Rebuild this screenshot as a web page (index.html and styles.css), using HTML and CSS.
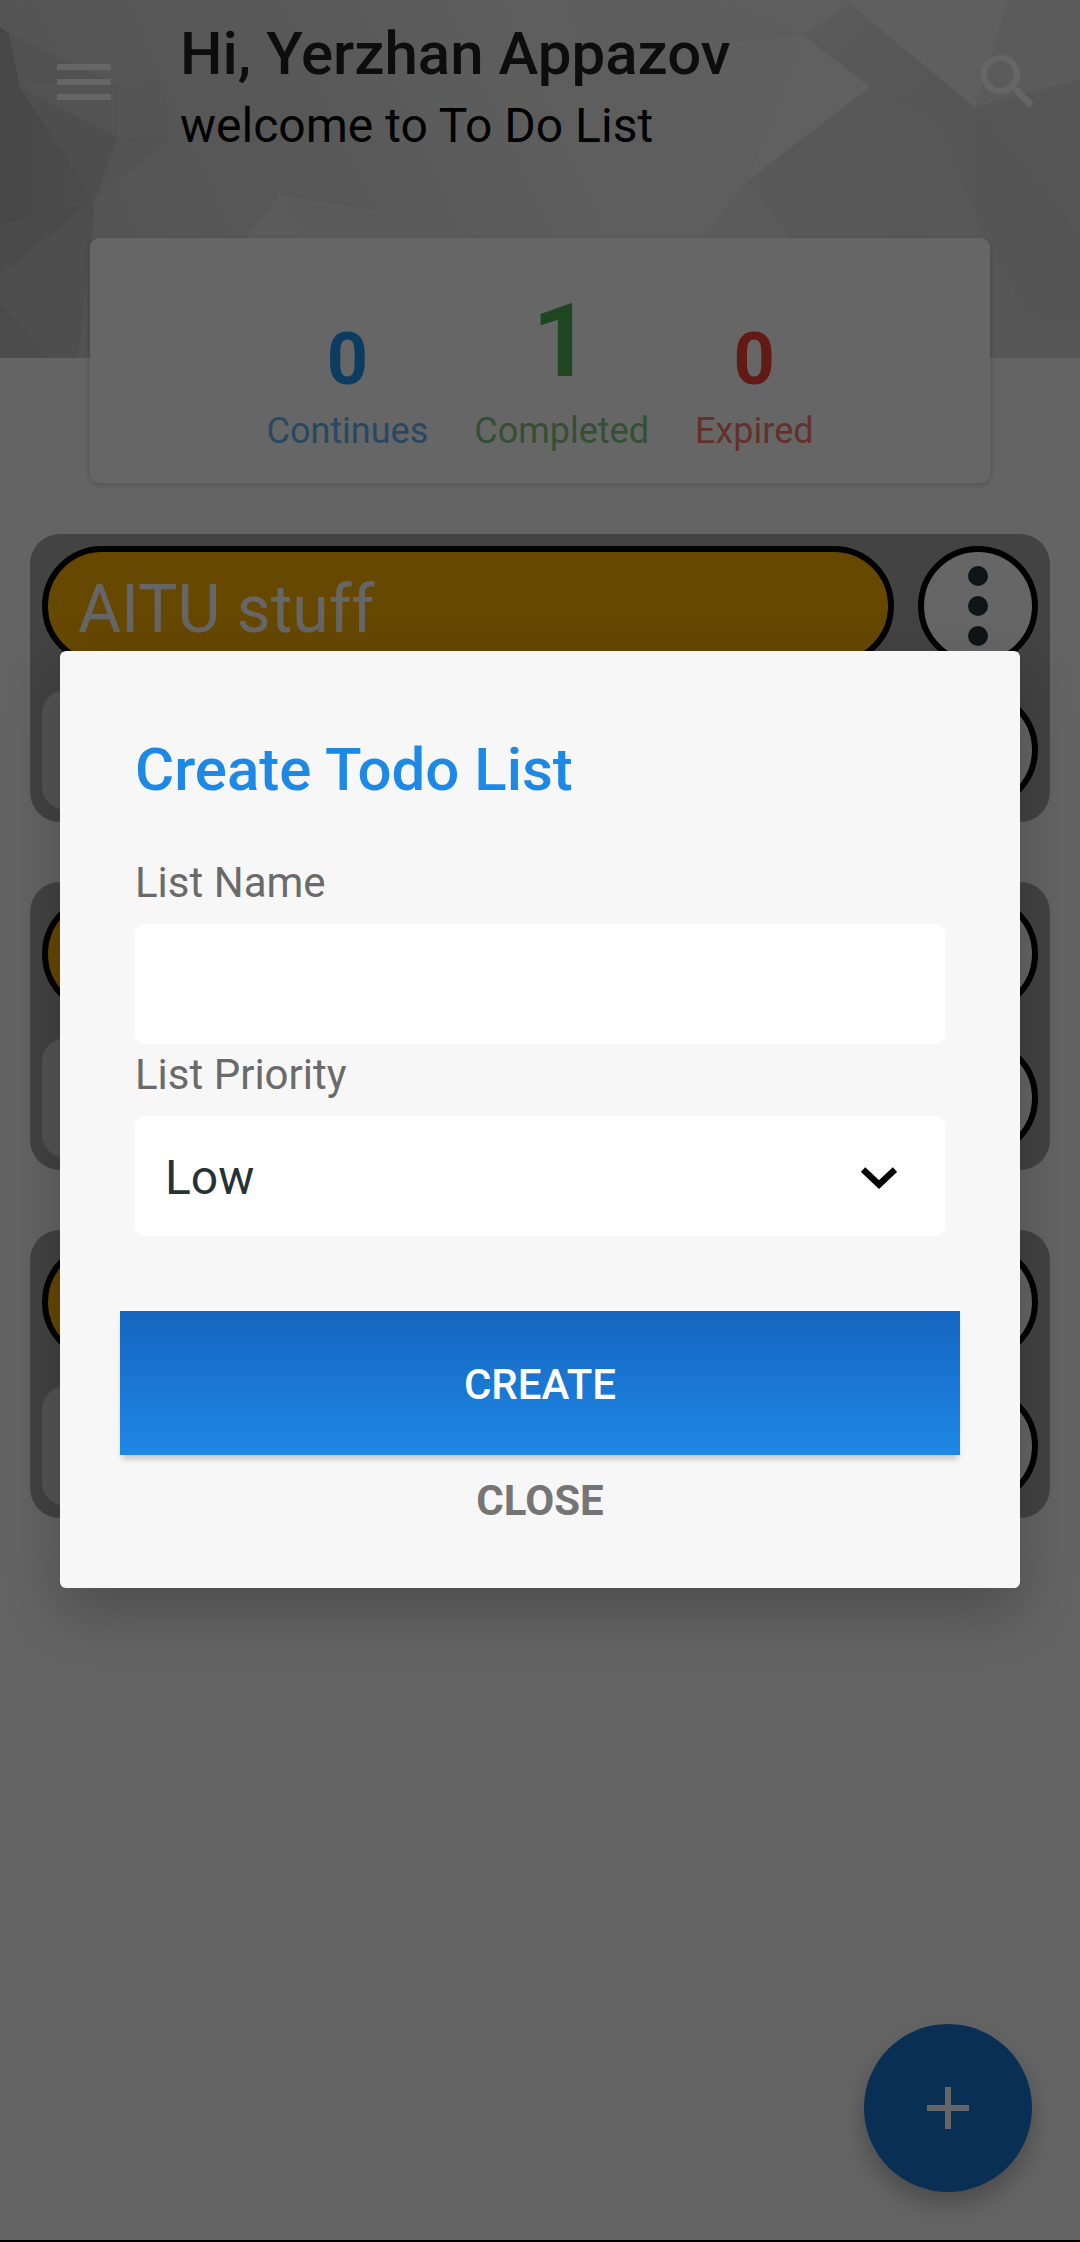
FILE: index.html
```html
<!DOCTYPE html>
<html lang="en">
<head>
<meta charset="utf-8">
<title>To Do List</title>
<link rel="stylesheet" href="styles.css">
</head>
<body>
<div class="screen">
  <header class="header">
    <svg class="header-art" viewBox="0 0 1080 358" preserveAspectRatio="none" aria-hidden="true">
      <defs>
        <linearGradient id="base" x1="0" x2="1" y1="0.15" y2="0">
          <stop offset="0" stop-color="#d4d4d4"/>
          <stop offset=".25" stop-color="#dcdcdc"/>
          <stop offset=".45" stop-color="#e9e9e9"/>
          <stop offset="1" stop-color="#ececec"/>
        </linearGradient>
        <linearGradient id="shade" x1="0" x2="1" y1="0" y2="0">
          <stop offset="0" stop-color="#b2b2b2"/>
          <stop offset="1" stop-color="#bebebe"/>
        </linearGradient>
        <linearGradient id="ridge" x1="0" x2="1" y1="0" y2=".6">
          <stop offset="0" stop-color="#e2e2e2"/>
          <stop offset="1" stop-color="#d6d6d6"/>
        </linearGradient>
        <linearGradient id="slope" x1="0" x2="1" y1="0" y2="0">
          <stop offset="0" stop-color="#dedede"/>
          <stop offset="1" stop-color="#d8d8d8"/>
        </linearGradient>
        <linearGradient id="edge" x1="0" x2="1" y1="0" y2="0">
          <stop offset="0" stop-color="#d7d7d7"/>
          <stop offset="1" stop-color="#d2d2d2"/>
        </linearGradient>
      </defs>
      <rect width="1080" height="358" fill="url(#base)"/>
      <polygon points="0,0 18,0 9,33 0,27" fill="#d2d2d2"/>
      <polygon points="0,27 9,33 20,87 95,200 0,225" fill="url(#shade)"/>
      <polygon points="9,33 108,80 20,87" fill="#cacaca"/>
      <polygon points="20,87 108,80 118,85 118,138" fill="#d0d0d0"/>
      <polygon points="20,87 118,138 95,200" fill="#c4c4c4"/>
      <polygon points="118,85 160,78 175,135 118,138" fill="#d4d4d4"/>
      <polygon points="118,138 175,135 95,200" fill="#d0d0d0"/>
      <polygon points="0,225 95,200 0,275" fill="#bababa"/>
      <polygon points="0,275 95,200 83,358 50,358 0,303" fill="#c2c2c2"/>
      <polygon points="0,303 50,358 0,358" fill="#bcbcbc"/>
      <polygon points="95,200 90,358 78,358" fill="#cdcdcd"/>
      <polygon points="280,195 305,238 245,238" fill="#e3e3e3"/>
      <polygon points="280,195 400,215 430,238 305,238" fill="#e1e1e1"/>
      <polygon points="720,0 803,35 730,42 575,40 565,0" fill="#e8e8e8"/>
      <polygon points="803,35 870,87 747,181 760,150" fill="#efefef"/>
      <polygon points="730,42 803,35 760,150 690,140" fill="#ededed"/>
      <polygon points="850,4 975,107 935,118 870,87 803,35" fill="url(#ridge)"/>
      <polygon points="850,0 1008,0 975,107 850,4" fill="#eeeeee"/>
      <polygon points="1008,0 1080,0 1080,80 975,107" fill="#e4e4e4"/>
      <polygon points="870,87 935,118 975,107 990,238 790,238 747,181" fill="url(#slope)"/>
      <polygon points="935,118 985,238 922,238" fill="#dbdbdb"/>
      <polygon points="975,107 1080,80 1080,358 1028,320 985,238 940,118" fill="url(#edge)"/>
      <polygon points="975,107 1080,80 1080,240 1060,205" fill="#d7d7d7"/>
      <polygon points="985,238 1028,320 985,340" fill="#d8d8d8"/>
      <polygon points="1028,318 1080,318 1080,358 985,358 985,340" fill="#d8d8d8"/>
      <polygon points="747,181 790,238 703,238" fill="#e4e4e4"/>
    </svg>
    <button class="icon-button" aria-label="Menu">
      <svg viewBox="0 0 24 24"><path d="M3 18h18v-2H3v2zm0-5h18v-2H3v2zm0-7v2h18V6H3z"/></svg>
    </button>
    <div class="greeting">
      <h1 class="greeting-name">Hi, Yerzhan Appazov</h1>
      <p class="greeting-text">welcome to To Do List</p>
    </div>
    <button class="icon-button" aria-label="Search">
      <svg viewBox="0 0 24 24"><path d="M15.5 14h-.79l-.28-.27C15.41 12.59 16 11.11 16 9.5 16 5.91 13.09 3 9.5 3S3 5.91 3 9.5 5.91 16 9.5 16c1.61 0 3.09-.59 4.23-1.57l.27.28v.79l5 4.99L20.49 19l-4.99-5zm-6 0C7.01 14 5 11.99 5 9.5S7.01 5 9.5 5 14 7.01 14 9.5 11.99 14 9.5 14z"/></svg>
    </button>
  </header>

  <section class="stats">
    <div class="stat stat-continues"><span class="stat-value">0</span><span class="stat-label">Continues</span></div>
    <div class="stat stat-completed"><span class="stat-value">1</span><span class="stat-label">Completed</span></div>
    <div class="stat stat-expired"><span class="stat-value">0</span><span class="stat-label">Expired</span></div>
  </section>

  <main class="lists">
    <article class="list">
      <div class="list-title">AITU stuff</div>
      <button class="more"><svg viewBox="0 0 108 108"><circle cx="54" cy="24" r="10"/><circle cx="54" cy="54" r="10"/><circle cx="54" cy="84" r="10"/></svg></button>
      <div class="list-item"></div>
      <button class="more"></button>
    </article>
    <article class="list">
      <div class="list-title"></div>
      <button class="more"></button>
      <div class="list-item"></div>
      <button class="more"></button>
    </article>
    <article class="list">
      <div class="list-title"></div>
      <button class="more"></button>
      <div class="list-item"></div>
      <button class="more"></button>
    </article>
  </main>

  <button class="fab" aria-label="Add list">
    <svg viewBox="0 0 24 24"><path d="M19 13h-6v6h-2v-6H5v-2h6V5h2v6h6v2z"/></svg>
  </button>

  <div class="scrim">
    <form class="dialog">
      <h2 class="dialog-title">Create Todo List</h2>
      <label class="field-label" for="list-name">List Name</label>
      <input class="field" id="list-name" type="text">
      <span class="field-label field-label-next">List Priority</span>
      <div class="field field-select">
        <span>Low</span>
        <svg class="chevron" viewBox="0 0 36 22"><path d="M2 2.5L18 17.5L34 2.5"/></svg>
      </div>
      <button class="create" type="button">CREATE</button>
      <button class="close" type="button">CLOSE</button>
    </form>
  </div>
</div>
</body>
</html>
```

FILE: styles.css
```css
* {
  box-sizing: border-box;
}

body {
  margin: 0;
  font-family: Roboto, "Noto Sans", sans-serif;
  background: #000;
}

h1, h2, p {
  margin: 0;
}

button, input {
  border: 0;
  padding: 0;
  font-family: inherit;
}

.screen {
  position: relative;
  height: 2242px;
  background: #fafafa;
  border-bottom: 2px solid #000;
  overflow: hidden;
}

.header {
  position: relative;
  display: flex;
  align-items: flex-start;
  height: 358px;
  padding: 19px 36px 0 48px;
}

.header-art {
  position: absolute;
  inset: 0;
  width: 100%;
  height: 100%;
}

.icon-button {
  position: relative;
  width: 72px;
  height: 72px;
  margin-top: 27px;
  background: none;
}

.icon-button svg {
  display: block;
  fill: #fff;
}

.greeting {
  position: relative;
  flex: 1;
  padding-left: 60px;
}

.greeting-name {
  font-size: 60px;
  line-height: 70px;
  font-weight: 500;
  color: #212121;
}

.greeting-text {
  margin-top: 8px;
  font-size: 48px;
  line-height: 57px;
  color: #000;
}

.stats {
  position: relative;
  display: flex;
  justify-content: center;
  align-items: flex-end;
  gap: 46px;
  width: 900px;
  height: 245px;
  margin: -120px auto 0;
  padding-bottom: 31px;
  border-radius: 9px;
  background: #fff;
  box-shadow: 0 2px 6px rgba(0, 0, 0, .18);
}

.stat {
  display: flex;
  flex-direction: column;
  align-items: center;
  gap: 9px;
}

.stat-value {
  font-size: 72px;
  line-height: 82px;
  font-weight: 700;
}

.stat-label {
  font-size: 36px;
  line-height: 42px;
  opacity: .7;
}

.stat-continues {
  color: #2196f3;
}

.stat-completed {
  color: #4caf50;
}

.stat-completed .stat-value {
  font-size: 102px;
  line-height: 120px;
}

.stat-expired {
  color: #f44336;
}

.lists {
  display: flex;
  flex-direction: column;
  gap: 60px;
  padding: 51px 30px 0;
}

.list {
  display: grid;
  grid-template-columns: 852px 120px;
  grid-auto-rows: 120px;
  gap: 24px;
  padding: 12px;
  border-radius: 30px;
  background: #a9a9a9;
}

.list-title {
  padding: 19px 30px 0;
  border: 6px solid #000;
  border-radius: 60px;
  background: #ffb300;
  color: #fff;
  font-size: 66px;
  line-height: 78px;
}

.list-item {
  border-radius: 24px;
  background: #d3d3d3;
}

.more {
  border: 6px solid #000;
  border-radius: 50%;
  background: #fff;
}

.more svg {
  display: block;
  fill: #263238;
}

.fab {
  position: absolute;
  right: 48px;
  bottom: 48px;
  display: grid;
  place-items: center;
  width: 168px;
  height: 168px;
  border-radius: 50%;
  background: #1976d2;
  box-shadow: 0 12px 24px rgba(0, 0, 0, .26);
}

.fab svg {
  width: 72px;
  fill: #fff;
}

.scrim {
  position: absolute;
  inset: 0;
  display: flex;
  justify-content: center;
  align-items: flex-start;
  padding-top: 651px;
  background: rgba(0, 0, 0, .6);
}

.dialog {
  display: flex;
  flex-direction: column;
  width: 960px;
  height: 937px;
  padding: 84px 60px 0;
  border-radius: 6px;
  background: #f7f7f7;
  box-shadow: 0 24px 60px rgba(0, 0, 0, .24);
}

.dialog-title {
  margin: 0 15px 53px;
  font-size: 60px;
  line-height: 70px;
  font-weight: 500;
  color: #1e88e5;
}

.field-label {
  margin: 0 15px 17px;
  font-size: 42px;
  line-height: 49px;
  color: #6a6a6a;
}

.field-label-next {
  margin-top: 6px;
}

.field {
  height: 120px;
  margin: 0 15px;
  padding: 0 30px;
  border-radius: 9px;
  background: #fff;
  color: #263238;
  font-size: 48px;
}

.field-select {
  display: flex;
  align-items: center;
  justify-content: space-between;
  padding: 3px 48px 0 30px;
}

.chevron {
  width: 36px;
  height: 22px;
  fill: none;
  stroke: #000;
  stroke-width: 6.5;
}

.create {
  flex: none;
  height: 144px;
  margin-top: 75px;
  padding-top: 2px;
  background: linear-gradient(#1565c0, #1e88e5);
  box-shadow: 0 6px 6px -2px rgba(0, 0, 0, .2);
  color: #fff;
  font-size: 42px;
  font-weight: 500;
}

.close {
  margin-top: 21px;
  background: none;
  color: #757575;
  font-size: 42px;
  line-height: 49px;
  font-weight: 700;
}
```
